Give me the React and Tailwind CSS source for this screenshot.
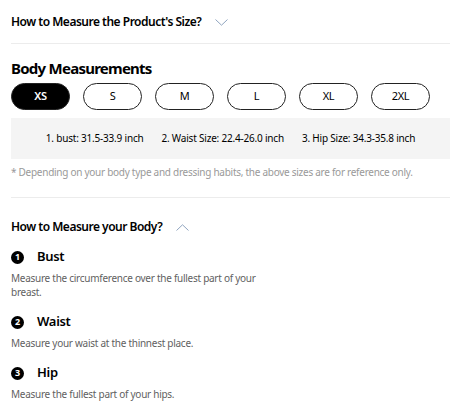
import React from "react";

const sizes = ["XS", "S", "M", "L", "XL", "2XL"];

const steps = [
  { n: 1, title: "Bust", text: "Measure the circumference over the fullest part of your breast." },
  { n: 2, title: "Waist", text: "Measure your waist at the thinnest place." },
  { n: 3, title: "Hip", text: "Measure the fullest part of your hips." },
];

const Chevron = ({ up }) => (
  <svg width="13" height="7" viewBox="0 0 13 7" fill="none" className="ml-[14px]">
    <path d={up ? "M0.5 6.5 L6.5 0.8 L12.5 6.5" : "M0.5 0.5 L6.5 6.2 L12.5 0.5"} stroke="#8fa4bf" strokeWidth="1" />
  </svg>
);

export default function App() {
  return (
    <div className="w-[467px] h-[418px] bg-white pl-[11px] pr-[17px] text-black overflow-hidden" style={{ fontFamily: '"Noto Sans", sans-serif' }}>
      <div className="flex items-center h-[44px] pt-[1px] border-b border-[#ececec]">
        <span className="text-[12px] font-semibold tracking-[-0.5px]">How to Measure the Product's Size?</span>
        <Chevron />
      </div>

      <h2 className="mt-[14px] text-[15px] font-bold leading-[20px] tracking-[-0.75px]">Body Measurements</h2>
      <div className="flex gap-[13px] mt-[5px]">
        {sizes.map((s, i) => (
          <div
            key={s}
            className={`w-[59px] h-[27px] rounded-full border-[1.5px] border-[#222] flex items-center justify-center text-[11px] tracking-[-0.3px] ${i === 0 ? "bg-black text-white font-semibold" : "bg-white"}`}
          >
            {s}
          </div>
        ))}
      </div>

      <div className="mt-[8px] h-[41px] bg-[#f4f4f4] flex items-center justify-center gap-[18px] text-[10px] tracking-[-0.2px]">
        <span>1. bust: 31.5-33.9 inch</span>
        <span>2. Waist Size: 22.4-26.0 inch</span>
        <span>3. Hip Size: 34.3-35.8 inch</span>
      </div>
      <p className="mt-[6px] text-[10px] text-[#999] tracking-[-0.27px] pb-[17px] border-b border-[#ececec]">
        * Depending on your body type and dressing habits, the above sizes are for reference only.
      </p>

      <div className="flex items-center mt-[20px]">
        <span className="text-[12px] font-semibold tracking-[-0.5px]">How to Measure your Body?</span>
        <Chevron up />
      </div>

      <div className="mt-[11px] flex flex-col gap-[13px]">
        {steps.map((st) => (
          <div key={st.n}>
            <div className="flex items-center h-[20px]">
              <span className="w-[13px] h-[13px] rounded-full bg-black text-white text-[9px] font-bold flex items-center justify-center">{st.n}</span>
              <span className="ml-[13px] text-[13px] font-semibold tracking-[-0.3px]">{st.title}</span>
            </div>
            <p className="mt-[4px] w-[250px] text-[10px] leading-[14px] text-[#5f5f5f] tracking-[-0.27px]">{st.text}</p>
          </div>
        ))}
      </div>
    </div>
  );
}
